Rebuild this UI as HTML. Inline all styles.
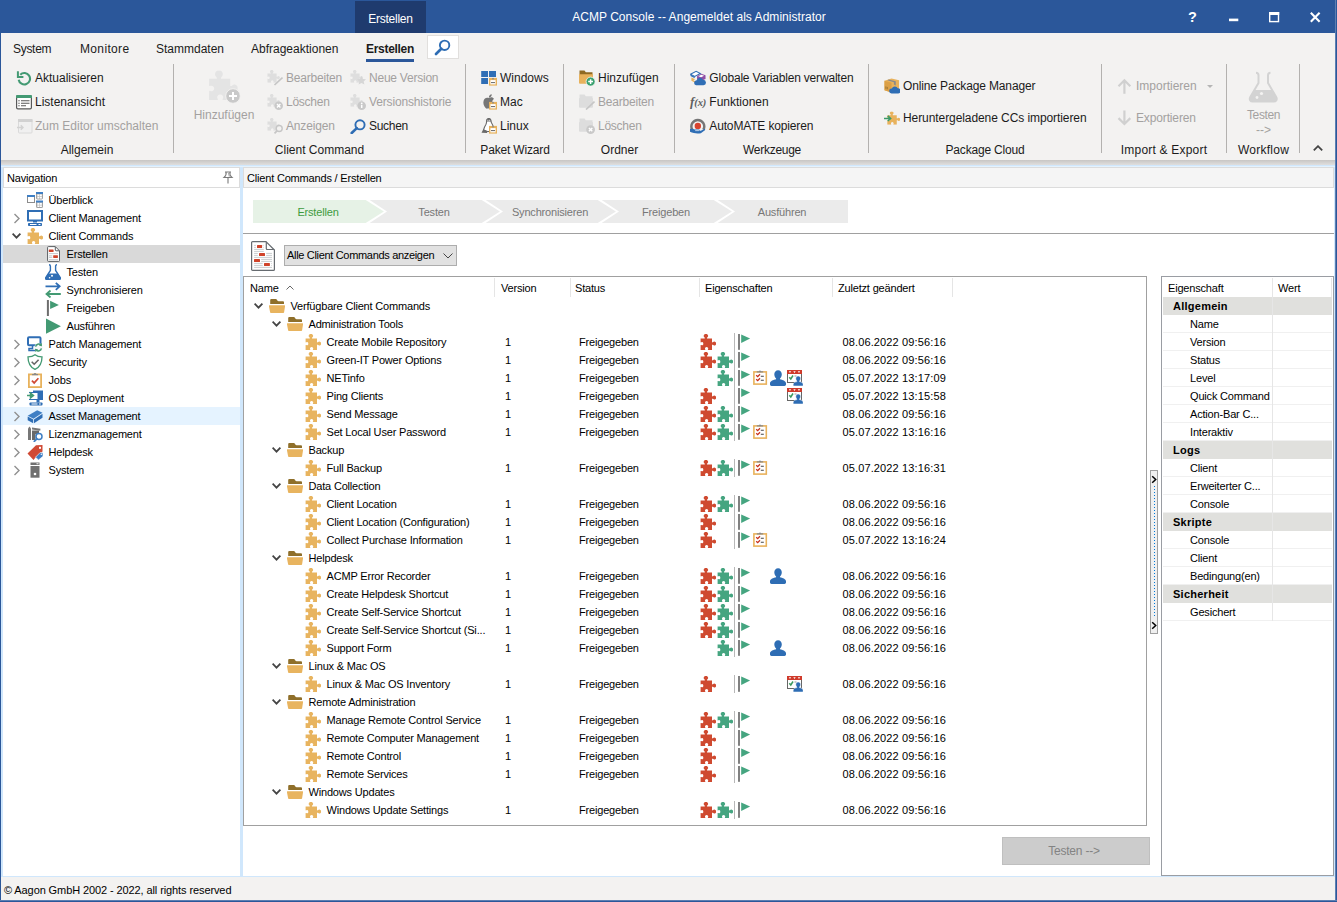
<!DOCTYPE html>
<html lang="de"><head><meta charset="utf-8"><title>ACMP Console</title>
<style>
html,body{margin:0;padding:0}
body{position:relative;width:1337px;height:902px;overflow:hidden;background:#fff;font-family:"Liberation Sans",sans-serif;font-size:12px;color:#000}
.i{position:absolute;display:block;overflow:visible}
.t{position:absolute;white-space:nowrap;line-height:14px;height:14px}
.r{font-size:12px;color:#1b1b1b}
.th{font-size:11px;letter-spacing:-0.18px;color:#000}
.b{font-weight:bold}
.d{color:#a3a1a0}
.gl{width:200px;text-align:center}
.dis{opacity:1}
#title::before{content:"";position:absolute;left:0;top:0;width:1337px;height:33px;background:#2b579a}
#ctxtab{position:absolute;left:355px;top:1px;width:71px;height:32px;background:#1f3b6e;color:#fff;font-size:12px;line-height:36px;text-align:center;letter-spacing:-0.25px}
#caption{letter-spacing:0.04px;position:absolute;left:499px;top:10px;width:400px;text-align:center;color:#fff;font-size:12px;line-height:14px}
#ribbon::before{content:"";position:absolute;left:1px;top:33px;width:1335px;height:127px;background:#f3f2f1}
#tabul{position:absolute;left:366px;top:59px;width:48px;height:3px;background:#2b579a}
#srch{position:absolute;left:427px;top:35px;width:32px;height:24px;background:#fff;border:1px solid #e1dfdd;box-sizing:border-box}
.gsep{position:absolute;top:64px;width:1px;height:89px;background:#b3b1af}
.ddarr{position:absolute;width:0;height:0;border-left:3px solid transparent;border-right:3px solid transparent;border-top:3px solid #b5b5b5}
#rshadow{position:absolute;left:1px;top:160px;width:1335px;height:5px;background:linear-gradient(#c8c6c4,#e0dfde)}
#main::before{content:"";position:absolute;left:1px;top:165px;width:1335px;height:712px;background:#d0e7fc}
#nav::before{content:"";position:absolute;left:3px;top:167px;width:237px;height:709px;background:#fff}
#navhead{position:absolute;left:3px;top:167px;width:237px;height:21px;box-sizing:border-box;border:1px solid #dcdcdc;background:#fff}
#navhead span,#chead span{position:absolute;left:3px;top:3px;font-size:11px;letter-spacing:-0.18px;line-height:14px;white-space:nowrap}
.navsel{position:absolute;left:3px;width:237px;height:18px;background:#d9d9d9}
.navhov{position:absolute;left:3px;width:237px;height:18px;background:#e5f3ff}
#content::before{content:"";position:absolute;left:243px;top:167px;width:1091px;height:709px;background:#fff}
#chead{position:absolute;left:243px;top:167px;width:1091px;height:21px;box-sizing:border-box;border:1px solid #dcdcdc;background:#f5f5f5}
.st{font-size:11px;letter-spacing:-0.18px}
#hline{position:absolute;left:243px;top:233px;width:1091px;height:1px;background:#a0a0a0}
#combo{position:absolute;left:284px;top:245px;width:173px;height:21px;box-sizing:border-box;border:1px solid #adadad;background:#e1e1e1}
#combo span{position:absolute;left:2px;top:2px;font-size:11px;letter-spacing:-0.32px;line-height:14px;white-space:nowrap}
#tree::before{content:"";position:absolute;left:243px;top:276px;width:904px;height:550px;box-sizing:border-box;border:1px solid #a0a0a0;background:#fff}
.hsep{position:absolute;top:278px;width:1px;height:19px;background:#e5e5e5}
.pline{position:absolute;left:734px;width:1px;height:18px;background:#b8b8b8}
#btn{letter-spacing:-0.2px;padding-right:4px;position:absolute;left:1002px;top:837px;width:148px;height:28px;box-sizing:border-box;border:1px solid #bfbfbf;background:#cccccc;color:#838383;font-size:12px;text-align:center;line-height:26px}
#vhandle{position:absolute;left:1150px;top:470px;width:8px;height:164px;box-sizing:border-box;border:1px solid #a0a0a0;background:#f0f0f0}
#vsplit{position:absolute;left:1154px;top:486px;width:1px;height:130px;background:repeating-linear-gradient(#0078d7 0 1px,transparent 1px 3px)}
#props::before{content:"";position:absolute;left:1161px;top:276px;width:173px;height:600px;box-sizing:border-box;border:1px solid #9a9da3;background:#fff}
.pvsep{position:absolute;left:1272px;top:278px;width:1px;height:343px;background:#e6e6e6}
.pvsep2{position:absolute;left:1331px;top:278px;width:1px;height:19px;background:#e6e6e6}
.phead{position:absolute;left:1163px;width:169px;height:18px;background:#e0e0dd}
.prow{position:absolute;left:1163px;width:169px;height:18px;box-sizing:border-box;border-bottom:1px solid #f0f0f0}
#status::before{content:"";position:absolute;left:1px;top:877px;width:1335px;height:24px;background:#f3f2f1}
#status span{position:absolute;left:4px;top:883px;font-size:11px;letter-spacing:-0.1px;line-height:14px;white-space:nowrap}
#bl{position:absolute;left:0;top:0;width:1px;height:902px;background:#2b579a}
#br{position:absolute;left:1335px;top:0;width:2px;height:902px;background:linear-gradient(90deg,#8fa6c9,#2b579a 50%)}
#bb{position:absolute;left:0;top:900px;width:1337px;height:2px;background:linear-gradient(#8fa6c9,#2b579a 50%)}
.fx{font-family:"Liberation Serif",serif;font-style:italic;font-weight:bold;color:#606060;height:18px;line-height:18px}
.fx .f1{font-size:13px}.fx .f2{font-size:10.500px;letter-spacing:-0.2px}
.dt{letter-spacing:0.13px}
.th.b{letter-spacing:0.25px}
#whelp{position:absolute;left:1188px;top:8.500px;font-size:14.500px;font-weight:bold;color:#fff;line-height:16px}
#main::after{content:"";position:absolute;left:1px;top:166px;width:1335px;height:1px;background:#e4f2fd}

</style></head>
<body>
<svg width="0" height="0" style="position:absolute"><defs>
<symbol id="w-min" viewBox="0 0 11 11"><rect x="0" y="7.600" width="9.300" height="2.600" fill="#fff"/></symbol>
<symbol id="w-max" viewBox="0 0 11 11"><rect x="0.700" y="0.700" width="8.800" height="8.900" fill="none" stroke="#fff" stroke-width="1.400"/><rect x="0" y="0" width="10.200" height="3" fill="#fff"/></symbol>
<symbol id="w-close" viewBox="0 0 11 11"><path d="M0.800 0.800L9.600 9.800M9.600 0.800L0.800 9.800" stroke="#fff" stroke-width="2.100"/></symbol>
<symbol id="mag" viewBox="0 0 20 18"><circle cx="11.600" cy="6.300" r="4.700" fill="none" stroke="#2e6db4" stroke-width="1.900"/><path d="M8.300 9.700L3 15" stroke="#2e6db4" stroke-width="2.700" stroke-linecap="round"/></symbol>
<symbol id="mag2" viewBox="0 0 16 16"><circle cx="10" cy="6.800" r="4.600" fill="none" stroke="#2e6db4" stroke-width="1.900"/><path d="M6.800 10.100L1.700 15" stroke="#2e6db4" stroke-width="2.600" stroke-linecap="round"/></symbol>
<symbol id="ch-r" viewBox="0 0 8 11"><path d="M1.500 1L6 5.500L1.500 10" fill="none" stroke="#909090" stroke-width="1.400"/></symbol>
<symbol id="ch-d" viewBox="0 0 10 7"><path d="M0.600 0.700L4.500 4.700L8.400 0.700" fill="none" stroke="#444" stroke-width="1.800"/></symbol>
<symbol id="ch-dd" viewBox="0 0 10 6"><path d="M0.5 0.5L5 5L9.5 0.5" fill="none" stroke="#444" stroke-width="1"/></symbol>
<symbol id="sortup" viewBox="0 0 8 5"><path d="M0.5 4.5L4 1L7.5 4.5" fill="none" stroke="#555" stroke-width="0.9"/></symbol>
<symbol id="collapse" viewBox="0 0 10 6"><path d="M0.800 5.300L5 1.200L9.200 5.300" fill="none" stroke="#444" stroke-width="1.800"/></symbol>
<symbol id="sp-arrow" viewBox="0 0 6 9"><path d="M1.200 1.200L4.700 4.500L1.200 7.800" fill="none" stroke="#000" stroke-width="1.500"/></symbol>
<symbol id="pz" viewBox="0 0 16 16"><path d="M0.600 4.500L4.500 4.500C4.900 4.500 4.900 4 4.600 3.600A2.100 2.100 0 1 1 7.200 3.600C6.900 4 6.900 4.500 7.300 4.500L12 4.500L12 8.100C12 8.500 12.500 8.500 12.900 8.300A1.900 1.900 0 1 1 12.900 10.800C12.500 10.600 12 10.600 12 11L12 16L8.200 16C7.800 16 7.800 15.600 8 15.300A1.600 1.600 0 1 0 5.200 15.300C5.400 15.600 5.400 16 5 16L0.600 16L0.600 11.300C0.600 10.900 1 10.900 1.300 11.100A1.500 1.500 0 1 0 1.300 8.300C1 8.500 0.600 8.500 0.600 8.100z"/></symbol>
<symbol id="pz-y" viewBox="0 0 16 16"><use href="#pz" width="16" height="16" fill="#e8b45f"/></symbol>
<symbol id="pz-r" viewBox="0 0 16 16"><use href="#pz" width="16" height="16" fill="#cf4a30"/></symbol>
<symbol id="pz-g" viewBox="0 0 16 16"><use href="#pz" width="16" height="16" fill="#45a580"/></symbol>
<symbol id="n-puzzle" viewBox="0 0 16 16"><use href="#pz" width="16" height="16" fill="#e8b45f"/></symbol>
<symbol id="folder" viewBox="0 0 16 16"><path d="M1.200 2A1 1 0 0 1 2.200 1H6.600C7.300 1 7.700 1.500 8.200 2.300C8.500 2.900 9 3.300 9.700 3.300H14A1 1 0 0 1 15 4.300V6H1.200z" fill="#8f6f2a"/><path d="M0.400 7.300H15.600A0.500 0.500 0 0 1 16.100 7.900L15.100 14.200A0.800 0.800 0 0 1 14.300 14.900H1.900A0.800 0.800 0 0 1 1.100 14.200L-0.100 7.900A0.500 0.500 0 0 1 0.400 7.300z" fill="#e8b45f"/></symbol>
<symbol id="flag" viewBox="0 0 16 16"><rect x="1.100" y="0" width="1.800" height="15.800" fill="#747474"/><path d="M4.200 0.500L13.100 4.500L4.200 9z" fill="#45a580"/></symbol>
<symbol id="clip" viewBox="0 0 16 16"><rect x="1.900" y="1.900" width="12.400" height="12.200" fill="#fff" stroke="#e9b25c" stroke-width="1.600"/><path d="M4.800 2.600V1.300h2a1.400 1.400 0 0 1 2.400 0h2v1.300z" fill="#8a8a8a"/><path d="M4.200 5.300l1.500 1.400L8 4.300M4.200 9.300l1.500 1.400L8 8.300" fill="none" stroke="#c9301c" stroke-width="1.300"/><path d="M8.800 6.300h3M8.800 10.300h3" stroke="#444" stroke-width="1.100"/></symbol>
<symbol id="user" viewBox="0 0 16 16"><path d="M8.100 0.200C10.300 0.200 11.800 1.900 11.800 4.300C11.800 6.200 11 7.700 10 8.500V9.200C12.500 9.800 16 10.900 16 13.200V14.600C16 15.400 15.300 16 14.500 16H1.500C0.700 16 0 15.400 0 14.600V13.200C0 10.900 3.500 9.800 6.100 9.200V8.500C5.100 7.700 4.300 6.200 4.300 4.300C4.300 1.900 5.900 0.200 8.100 0.200z" fill="#2e6db4"/></symbol>
<symbol id="caluser" viewBox="0 0 16 16"><rect x="0.500" y="0.500" width="14" height="12" fill="#fff" stroke="#666" stroke-width="1"/><rect x="0" y="0" width="15" height="4" fill="#cf3a2b"/><path d="M1.800 1.200h2.400l-1.200 1.800zM6.300 1.200h2.400l-1.200 1.800zM10.800 1.200h2.400l-1.200 1.800z" fill="#fff"/><path d="M2.300 7.300l1.500 1.700L6 5.500" fill="none" stroke="#3c9a5f" stroke-width="1.500"/><path d="M7.500 6h2" stroke="#999" stroke-width="1"/><path d="M11.200 6C12.700 6 13.600 7.100 13.600 8.600C13.600 9.700 13.100 10.600 12.500 11.100V11.600C14.100 12 16.200 12.700 16.200 14.200V16H6.200V14.200C6.200 12.700 8.300 12 9.900 11.600V11.100C9.300 10.600 8.800 9.700 8.800 8.600C8.800 7.100 9.700 6 11.200 6z" fill="#2e6db4" stroke="#fff" stroke-width="0.500"/></symbol>

<symbol id="n-overview" viewBox="0 0 16 16"><rect x="0.5" y="4" width="7" height="6.500" fill="#fff" stroke="#8c8c8c"/><rect x="0" y="3" width="8" height="2" fill="#3f7fc4"/><rect x="9.500" y="1" width="6" height="6" rx="0.600" fill="#c2c2c2" stroke="#a0a0a0"/><rect x="9" y="0" width="7" height="2" fill="#3f7fc4"/><path d="M10.500 2.500h1.800v1.800h-1.800zM13 2.500h1.800v1.800H13zM10.500 4.900h1.800v1.500h-1.800zM13 4.900h1.800v1.500H13z" fill="#fff"/><rect x="9.500" y="9.500" width="6" height="6" rx="0.600" fill="#c2c2c2" stroke="#a0a0a0"/><rect x="9" y="8.500" width="7" height="2" fill="#3f7fc4"/><path d="M10.500 11h1.800v1.800h-1.800zM13 11h1.800v1.800H13zM10.500 13.400h1.800v1.500h-1.800zM13 13.400h1.800v1.500H13z" fill="#fff"/></symbol>
<symbol id="n-client" viewBox="0 0 16 16"><rect x="1" y="1" width="14" height="9.500" fill="#fff" stroke="#2f6eb5" stroke-width="2"/><rect x="6" y="11" width="4" height="1.500" fill="#2f6eb5"/><rect x="1" y="13" width="14" height="3" rx="0.800" fill="#2f6eb5"/><rect x="3" y="14" width="6.500" height="1" fill="#fff"/><rect x="11.500" y="14" width="2" height="1" fill="#fff"/></symbol>
<symbol id="n-doc" viewBox="0 0 16 16"><path d="M3.400 0.600H10.300L14.500 4.800V14.600a0.800 0.800 0 0 1-0.800 0.800H3.400a0.800 0.800 0 0 1-0.800-0.800V1.400a0.800 0.800 0 0 1 0.800-0.800z" fill="#fff" stroke="#5a5e62"/><path d="M10.300 0.800V4a0.800 0.800 0 0 0 0.800 0.800H14.300" fill="none" stroke="#5a5e62"/><rect x="3.800" y="3.500" width="4.800" height="2.400" rx="0.400" fill="#d0432a"/><rect x="8.200" y="9.200" width="4.700" height="2.700" rx="0.400" fill="#d0432a"/><path d="M4 7.600h9M4 9.800h3.300M4 11.400h3.300M4 13.700h9" stroke="#b5b8bb" stroke-width="0.800"/></symbol>
<symbol id="n-flask" viewBox="0 0 16 16"><path d="M4 0.700C5 0.700 5.400 1.300 5.400 2.200V6.500L0.900 13.300C0.200 14.500 0.900 15.700 2.200 15.700H13.800C15.100 15.700 15.800 14.500 15.100 13.300L10.600 6.500V2.200C10.600 1.300 11 0.700 12 0.700" fill="none" stroke="#2f6eb5" stroke-width="1.400"/><path d="M3.200 9.500H12.800L15.100 13.300C15.800 14.500 15.100 15.700 13.800 15.700H2.200C0.900 15.700 0.200 14.500 0.900 13.300z" fill="#2f6eb5"/><circle cx="7" cy="11.700" r="1" fill="#fff"/><circle cx="4.600" cy="13.700" r="0.800" fill="#fff"/></symbol>
<symbol id="n-sync" viewBox="0 0 16 16"><path d="M0.500 4.300H14.500M10.800 0.800L14.700 4.300L10.800 7.800" fill="none" stroke="#2f6eb5" stroke-width="1.800"/><path d="M15.800 12H1.800M5.500 8.500L1.500 12L5.500 15.500" fill="none" stroke="#439a73" stroke-width="1.800"/></symbol>
<symbol id="n-flag" viewBox="0 0 16 16"><rect x="1.900" y="0" width="2" height="16" fill="#6d6d6d"/><path d="M5.100 0.700L13.900 5L5.100 9z" fill="#439a73"/></symbol>
<symbol id="n-play" viewBox="0 0 16 16"><path d="M1 0.600L15.900 8.200L1 15.800z" fill="#439a73"/></symbol>
<symbol id="n-patch" viewBox="0 0 16 16"><rect x="1" y="1.300" width="12.500" height="8" rx="1" fill="#fff" stroke="#2f6eb5" stroke-width="2"/><path d="M5.500 10v2.500H2v2h6" fill="none" stroke="#2f6eb5" stroke-width="1.500"/><circle cx="11.500" cy="11.500" r="4.300" fill="#f8f8f8"/><path d="M8.600 10.600a3.100 3.100 0 0 1 5.300-1.500M14.400 12.400a3.100 3.100 0 0 1-5.300 1.500" fill="none" stroke="#439a73" stroke-width="1.500"/><path d="M14.800 7l0.200 3.200-3.100-0.500zM8.200 16l-0.200-3.200 3.100 0.500z" fill="#439a73"/></symbol>
<symbol id="n-shield" viewBox="0 0 16 16"><path d="M8 0.800C10 2.400 12.500 2.900 15 2.900C15 9 13 13 8 15.400C3 13 1 9 1 2.900C3.500 2.900 6 2.400 8 0.800z" fill="#fff" stroke="#439a73" stroke-width="1.300"/><path d="M4.700 7.700L7.200 10.200L11.600 5.700" fill="none" stroke="#666" stroke-width="1.600"/></symbol>
<symbol id="n-jobs" viewBox="0 0 16 16"><rect x="1.900" y="2.400" width="12.200" height="12.700" fill="#fff" stroke="#e8b25c" stroke-width="1.800"/><path d="M5 3.200V2h1.600a1.500 1.500 0 0 1 2.800 0H11v1.200z" fill="#8a8a8a"/><path d="M4.900 8.600L7.200 10.900L11.400 6.300" fill="none" stroke="#d04a35" stroke-width="1.700"/></symbol>
<symbol id="n-osd" viewBox="0 0 16 16"><rect x="6" y="0.500" width="10" height="9.500" fill="#2f6eb5"/><rect x="9.500" y="10" width="3" height="2.500" fill="#2f6eb5"/><rect x="2.500" y="12.500" width="13" height="3" rx="0.800" fill="#2f6eb5"/><rect x="4.500" y="13.500" width="6" height="1" fill="#fff"/><rect x="12" y="13.500" width="1.800" height="1" fill="#fff"/><path d="M2 2.500h9v7H2" fill="#fff" stroke="#2f6eb5" stroke-width="1"/><path d="M0 5.500h5M3.500 3L6.500 5.500L3.500 8z" fill="#439a73" stroke="#439a73" stroke-width="1.500"/></symbol>
<symbol id="n-asset" viewBox="0 0 16 16"><path d="M0.700 7.800L10.200 2.300L15.500 4.800L6.500 10.700z" fill="#3f7fc4"/><path d="M0.700 8.600L6.200 11.400V15.200L0.700 12.300z" fill="#2f6eb5"/><path d="M7 11.400L15.500 5.700V9.700L7 15.200z" fill="#2f6eb5"/></symbol>
<symbol id="n-lic" viewBox="0 0 16 16"><path d="M1 2.500l1.500-2 1.500 2V14H1z" fill="#777"/><path d="M5 1.500l8.500 1.200-0.300 2L5 3.500z" fill="#777"/><path d="M5 4.500h7v3.500h-3.500v6H5z" fill="#6a6a6a"/><circle cx="12" cy="10.500" r="3" fill="#fff" stroke="#3f7fc4" stroke-width="1.500"/><path d="M9.800 12.800L7.300 15.300" stroke="#3f7fc4" stroke-width="1.800" stroke-linecap="round"/></symbol>
<symbol id="n-help" viewBox="0 0 16 16"><path d="M0.500 9.500L9 1.200L15.500 1V7.500L13 10L8.500 13.500L6.500 16z" fill="#d04a35"/><rect x="12" y="2.800" width="2" height="2" fill="#fff"/><path d="M8.500 13.200L13.200 8.500L16 8.800V12.300L11.500 16z" fill="#3f7fc4" stroke="#fff" stroke-width="0.600"/><circle cx="14.300" cy="10.300" r="0.700" fill="#fff"/></symbol>
<symbol id="n-sys" viewBox="0 0 16 16"><rect x="3.500" y="0.500" width="9" height="2.500" fill="#707070"/><rect x="9.500" y="1.300" width="2" height="0.900" fill="#fff"/><rect x="3.500" y="4" width="9" height="11.700" fill="#707070"/><circle cx="8" cy="12" r="1.300" fill="#fff"/></symbol>
<symbol id="pin" viewBox="0 0 12 14"><path d="M3 1h6M4 1.200C4.500 3 4.300 4.500 2 6.500H10C7.700 4.500 7.500 3 8 1.200M6 6.500V12.500" fill="none" stroke="#7a7a7a" stroke-width="1.100"/><path d="M6.500 2l1 3.500" stroke="#aaa" stroke-width="1.200"/></symbol>
<symbol id="bigdoc" viewBox="0 0 24 30"><path d="M1.600 0.600H15L23.400 9V28.400a1 1 0 0 1-1 1H1.600a1 1 0 0 1-1-1V1.600a1 1 0 0 1 1-1z" fill="#fff" stroke="#666b70" stroke-width="1.200" stroke-linejoin="round"/><path d="M15.300 0.800V7.500a1 1 0 0 0 1 1H23.200" fill="none" stroke="#666b70" stroke-width="1.200"/><path d="M3.100 4.400h1.800M3.100 6.400h1.800M12.200 4.400h0.600M12.200 6.400h0.600M3.100 8.400h9.700M3.100 10.400h9.700M3.100 12.400h3.700M3.100 14.400h3.700M15.200 12.400h5.800M15.200 14.400h5.800M3.100 16.400h17.900M10.200 18.400h10.800M10.200 20.400h10.800M3.100 22.400h8.600M3.100 24.400h8.600M20.300 22.400h0.700M20.300 24.400h0.700M3.100 26.400h17.900" stroke="#c3c6c9" stroke-width="0.900"/><rect x="6" y="4.100" width="5.100" height="2.800" rx="0.500" fill="#d0432a"/><rect x="8" y="12.100" width="6" height="2.800" rx="0.500" fill="#d0432a"/><rect x="3" y="18.100" width="6" height="2.800" rx="0.500" fill="#d0432a"/><rect x="13" y="22.100" width="5.900" height="2.800" rx="0.500" fill="#d0432a"/></symbol>

<symbol id="refresh" viewBox="0 0 16 16"><path d="M2.700 9.700A5.700 5.700 0 1 0 4.300 4.700" fill="none" stroke="#439a73" stroke-width="2.100"/><path d="M1.900 1.300V6.900H7.400" fill="none" stroke="#439a73" stroke-width="2"/></symbol>
<symbol id="listview" viewBox="0 0 16 16"><rect x="0.600" y="1.600" width="14.800" height="13.300" rx="1.300" fill="#fff" stroke="#585858" stroke-width="1.200"/><path d="M0 4V2.300A1.300 1.300 0 0 1 1.300 1H14.700A1.300 1.300 0 0 1 16 2.300V4z" fill="#439a73"/><path d="M2.300 6.700h1.400M2.300 9.200h1.400M2.300 11.700h1.400M5 6.700h8.500M5 9.200h8.500M5 11.700h5" stroke="#585858" stroke-width="1.100"/></symbol>
<symbol id="editor" viewBox="0 0 16 16"><rect x="1.500" y="1.500" width="13.500" height="13.500" rx="0.800" fill="#f0f0f0" stroke="#dadada"/><rect x="1" y="1" width="14.500" height="3" fill="#d2d2d2"/><path d="M0 9.500h5.500M3.800 7.300l2.200 2.200-2.200 2.200" fill="none" stroke="#d2d2d2" stroke-width="1.400"/></symbol>
<symbol id="pz-big" viewBox="0 0 34 38"><g transform="translate(1 2.500) scale(1.850)"><use href="#pz" width="16" height="16" fill="#e4e4e4"/></g><circle cx="26" cy="28" r="7.300" fill="#c9c9c9" stroke="#f3f2f1" stroke-width="1"/><path d="M22 28h8M26 24v8" stroke="#fff" stroke-width="2"/></symbol>
<symbol id="pzs" viewBox="0 0 16 16"><g transform="translate(0 0) scale(0.800)"><use href="#pz" width="16" height="16" fill="#dedede"/></g></symbol>
<symbol id="pz-edit" viewBox="0 0 16 16"><use href="#pzs" width="16" height="16"/><path d="M7.500 15L15.500 7.500" stroke="#c6c6c6" stroke-width="1.700"/></symbol>
<symbol id="pz-del" viewBox="0 0 16 16"><use href="#pzs" width="16" height="16"/><circle cx="11.700" cy="11.700" r="4.300" fill="#c9c9c9"/><path d="M10 10l3.400 3.400M13.400 10L10 13.400" stroke="#fff" stroke-width="1.400"/></symbol>
<symbol id="pz-view" viewBox="0 0 16 16"><use href="#pzs" width="16" height="16"/><circle cx="12.200" cy="10.500" r="3" fill="#f3f2f1" stroke="#c6c6c6" stroke-width="1.400"/><path d="M10 12.800L7.500 15.300" stroke="#c6c6c6" stroke-width="1.800"/></symbol>
<symbol id="pz-new" viewBox="0 0 16 16"><use href="#pzs" width="16" height="16"/><path d="M11.500 6l1.400 3 3.100 0.300-2.300 2.100 0.700 3.100-2.900-1.600-2.900 1.600 0.700-3.100L7 9.300l3.100-0.300z" fill="#d6d6d6"/></symbol>
<symbol id="pz-hist" viewBox="0 0 16 16"><use href="#pzs" width="16" height="16"/><circle cx="11.700" cy="11.700" r="4.300" fill="#c9c9c9"/><path d="M11.700 10.800v3.200" stroke="#fff" stroke-width="1.500"/><circle cx="11.700" cy="9.300" r="0.900" fill="#fff"/></symbol>
<symbol id="pkg" viewBox="0 0 8 8"><rect x="0.700" y="0.700" width="6.600" height="6.600" fill="#fff" stroke="#e8b25c" stroke-width="1.400"/><rect x="0" y="0" width="8" height="2.300" fill="#e8b25c"/><rect x="3.200" y="0" width="1.600" height="1.600" fill="#8a8a8a"/><path d="M2 4.800h4" stroke="#666" stroke-width="1"/></symbol>
<symbol id="win" viewBox="0 0 16 16"><path d="M0.200 1h6.800v6H0.200zM8 1h7v6H8zM0.200 8h6.800v6H0.200z" fill="#2f6eb5"/><path d="M8 8h1v6H8z" fill="#2f6eb5"/><use href="#pkg" x="8" y="7.800" width="8" height="8"/></symbol>
<symbol id="mac" viewBox="0 0 16 16"><path d="M8.300 3.800C9.300 3.200 10.500 3 11.500 3.500C12.300 3.900 12.800 4.500 13 5C11.800 5.700 11.300 6.700 11.400 8C11.500 9.300 12.200 10.200 13.300 10.700C12.800 12.200 11.900 13.500 11 14.300C10.300 14.900 9.500 14.600 8.700 14.300C7.900 14 7.300 14.300 6.600 14.600C5.800 14.900 5.200 14.600 4.600 14C3 12.300 1.800 9.300 2.600 6.700C3.200 4.800 4.700 3.600 6.300 3.700C7 3.700 7.700 4.100 8.300 3.800z" fill="#767676"/><path d="M10.700 0.300C10.800 1.300 10.400 2.200 9.800 2.800C9.300 3.300 8.600 3.600 7.900 3.500C7.800 2.600 8.200 1.800 8.700 1.200C9.200 0.700 10 0.300 10.700 0.300z" fill="#767676"/><use href="#pkg" x="8" y="7.800" width="8" height="8"/></symbol>
<symbol id="linux" viewBox="0 0 16 16"><path d="M7.800 0.500C9.200 0.500 10 1.500 10 2.900C10 4.300 10.500 5 11.300 6.300C12 7.500 12.500 9 12.500 10.500V13.500H5.500L2.500 12C3 10 4 8 5 6.300C5.600 5.200 5.600 4.300 5.600 2.900C5.600 1.500 6.400 0.500 7.800 0.500z" fill="#fff" stroke="#6a6a6a" stroke-width="1.100"/><path d="M5.400 3.600V2.700C5.400 1.300 6.400 0.300 7.800 0.300S10.200 1.300 10.200 2.700V3.600z" fill="#6a6a6a"/><circle cx="6.900" cy="2.300" r="0.550" fill="#fff"/><circle cx="8.700" cy="2.300" r="0.550" fill="#fff"/><path d="M0.500 14.700L2.300 11.300L6.500 13L6 14.900z" fill="#6a6a6a"/><use href="#pkg" x="8" y="7.800" width="8" height="8"/></symbol>
<symbol id="fo" viewBox="0 0 16 16"><path d="M0.500 0.500h5l1.300 1.800H13.500v4H0.500z"/><path d="M0 4.300h14v8.500a1 1 0 0 1-1 1H1a1 1 0 0 1-1-1z"/></symbol>
<symbol id="fo-add" viewBox="0 0 16 16"><path d="M0.500 0.500h5l1.300 1.800H13.500v4H0.500z" fill="#8f6a23"/><path d="M0 4.300h14v8.500a1 1 0 0 1-1 1H1a1 1 0 0 1-1-1z" fill="#e8b25c"/><circle cx="11.600" cy="11.600" r="4.500" fill="#3aa16f" stroke="#f3f2f1" stroke-width="0.800"/><path d="M9.200 11.600h4.800M11.600 9.200v4.800" stroke="#fff" stroke-width="1.500"/></symbol>
<symbol id="fo-edit" viewBox="0 0 16 16"><use href="#fo" width="16" height="16" fill="#dddddd"/><path d="M7 15.500L15.500 7.500" stroke="#c6c6c6" stroke-width="1.700"/></symbol>
<symbol id="fo-del" viewBox="0 0 16 16"><use href="#fo" width="16" height="16" fill="#dddddd"/><circle cx="11.600" cy="11.600" r="4.400" fill="#c9c9c9"/><path d="M9.900 9.900l3.400 3.400M13.300 9.900L9.900 13.300" stroke="#fff" stroke-width="1.400"/></symbol>
<symbol id="globvar" viewBox="0 0 17 16"><path d="M0.500 4L6.500 0.800L11 3.200L5 6.400z" fill="#fff" stroke="#2f6eb5" stroke-width="1.100"/><path d="M0.500 4.200L5 6.600V8.200L0.500 5.800z" fill="#2f6eb5"/><path d="M7.500 6L12 3.500L16.500 5V9L12 11L7.500 9z" fill="#8f4fa6"/><path d="M8.800 6.100L12 4.500L15 5.500L11.800 7.100z" fill="#fff"/><path d="M1.500 7.500L5.500 9.300L3.500 10.300L5.500 11.500V13L1.500 11z" fill="#e8b25c"/><path d="M6.500 15.800a2.800 2.800 0 0 1 0.500-5.500a3.600 3.600 0 0 1 6.800-0.300a2.900 2.900 0 0 1 0.500 5.800z" fill="#2f6eb5"/></symbol>
<symbol id="automate" viewBox="0 0 17 16"><path d="M2.400 11.800A6.800 6.800 0 1 1 14.200 11.800" fill="none" stroke="#767676" stroke-width="2.600"/><circle cx="8.300" cy="7.900" r="3.400" fill="#d8432e"/><path d="M0 11.300C1.800 10.700 3.500 11 5 11.700H9.500C10.500 11.700 10.600 12.800 9.600 12.900H7L11.500 13L15 11.200C16 10.800 16.600 11.800 15.800 12.400L11.500 15.600C8 16.200 4 16 0 14.200z" fill="#2f6eb5"/><path d="M5.500 12.900h4" stroke="#fff" stroke-width="0.700"/></symbol>
<symbol id="opm" viewBox="0 0 17 17"><path d="M0.500 3L8 0.500L16 2.500V12L8 15.500L0.500 13z" fill="#e8b25c"/><path d="M0.500 3L8 5V15.500L0.500 13z" fill="#dca046"/><path d="M5 1.500L12.500 3.500V8L10.500 7V4.500L3.500 2.300z" fill="#8a8a8a"/><path d="M2 9v2.500M3.500 9.500v2.500" stroke="#8a6a30" stroke-width="0.800"/><path d="M8 16.500a2.700 2.700 0 0 1 0.300-5.400a3.500 3.500 0 0 1 6.400-0.200a2.800 2.800 0 0 1 0.300 5.600z" fill="#2f6eb5"/></symbol>
<symbol id="ccimp" viewBox="0 0 17 16"><g transform="translate(3 1) scale(0.880)"><use href="#pz" width="16" height="16" fill="#e8b25c"/></g><path d="M0 8.500h6M4 5.800L7 8.500L4 11.200" fill="none" stroke="#3a9a68" stroke-width="1.700"/></symbol>
<symbol id="arr-up" viewBox="0 0 16 16"><path d="M7.400 15.700V2.500M1.500 8.200L7.400 2.300L13.300 8.200" fill="none" stroke="#d0d0d0" stroke-width="2.200"/></symbol>
<symbol id="arr-dn" viewBox="0 0 16 16"><path d="M7.400 0.600V13.800M1.500 8.100L7.400 14L13.300 8.100" fill="none" stroke="#d0d0d0" stroke-width="2.200"/></symbol>
<symbol id="flask-big" viewBox="0 0 32 36"><path d="M9 3.700C10.800 3.700 11.500 4.700 11.500 6.200V14L3.300 28C2 30.300 3.300 32.600 5.800 32.600H26.700C29.200 32.600 30.500 30.300 29.200 28L21 14V6.200C21 4.700 21.700 3.700 23.500 3.700" fill="none" stroke="#d3d3d3" stroke-width="2"/><path d="M7.500 21H25L29.200 28C30.500 30.300 29.200 32.600 26.700 32.600H5.800C3.300 32.600 2 30.300 3.300 28z" fill="#d3d3d3"/><circle cx="14.500" cy="24.500" r="1.600" fill="#f3f2f1"/><circle cx="10" cy="28.500" r="1.400" fill="#f3f2f1"/></symbol>
</defs></svg>
<div id="title"><div id="ctxtab">Erstellen</div><div id="caption">ACMP Console -- Angemeldet als Administrator</div><div id="whelp">?</div><svg class="i " style="left:1229px;top:11px" width="11" height="11"><use href="#w-min"/></svg><svg class="i " style="left:1269px;top:12px" width="11" height="11"><use href="#w-max"/></svg><svg class="i " style="left:1310px;top:12px" width="11" height="11"><use href="#w-close"/></svg></div>
<div id="ribbon"><div class="t r" style="left:13px;top:42px;letter-spacing:-0.3px;">System</div><div class="t r" style="left:80px;top:42px;letter-spacing:0.35px;">Monitore</div><div class="t r" style="left:156px;top:42px;">Stammdaten</div><div class="t r" style="left:251px;top:42px;">Abfrageaktionen</div><div class="t r b" style="left:366px;top:42px;letter-spacing:-0.3px">Erstellen</div><div id="tabul"></div><div id="srch"></div><svg class="i " style="left:433px;top:39px" width="20" height="18"><use href="#mag"/></svg><div class="gsep" style="left:173px"></div><div class="gsep" style="left:465px"></div><div class="gsep" style="left:563px"></div><div class="gsep" style="left:674px"></div><div class="gsep" style="left:868px"></div><div class="gsep" style="left:1101px"></div><div class="gsep" style="left:1226px"></div><div class="gsep" style="left:1299px"></div><div class="t r gl" style="left:-13px;top:143px;letter-spacing:0px">Allgemein</div><div class="t r gl" style="left:219.5px;top:143px;letter-spacing:0px">Client Command</div><div class="t r gl" style="left:415px;top:143px;letter-spacing:-0.17px">Paket Wizard</div><div class="t r gl" style="left:519.5px;top:143px;letter-spacing:0px">Ordner</div><div class="t r gl" style="left:672px;top:143px;letter-spacing:-0.28px">Werkzeuge</div><div class="t r gl" style="left:885px;top:143px;letter-spacing:-0.19px">Package Cloud</div><div class="t r gl" style="left:1064px;top:143px;letter-spacing:0.2px">Import &amp; Export</div><div class="t r gl" style="left:1163.5px;top:143px;letter-spacing:0.25px">Workflow</div><svg class="i " style="left:16px;top:70px" width="16" height="16"><use href="#refresh"/></svg><div class="t r" style="left:35px;top:71px;">Aktualisieren</div><svg class="i " style="left:16px;top:94px" width="16" height="16"><use href="#listview"/></svg><div class="t r" style="left:35px;top:95px;">Listenansicht</div><svg class="i dis" style="left:17px;top:118px" width="16" height="16"><use href="#editor"/></svg><div class="t r d" style="left:35px;top:119px;">Zum Editor umschalten</div><svg class="i " style="left:207px;top:68px" width="34" height="38"><use href="#pz-big"/></svg><div class="t r d gl" style="left:124px;top:108px">Hinzufügen</div><svg class="i dis" style="left:267px;top:70px" width="16" height="16"><use href="#pz-edit"/></svg><div class="t r d" style="left:286px;top:71px;letter-spacing:-0.2px;">Bearbeiten</div><svg class="i dis" style="left:267px;top:94px" width="16" height="16"><use href="#pz-del"/></svg><div class="t r d" style="left:286px;top:95px;letter-spacing:-0.25px;">Löschen</div><svg class="i dis" style="left:267px;top:118px" width="16" height="16"><use href="#pz-view"/></svg><div class="t r d" style="left:286px;top:119px;letter-spacing:-0.17px;">Anzeigen</div><svg class="i dis" style="left:350px;top:70px" width="16" height="16"><use href="#pz-new"/></svg><div class="t r d" style="left:369px;top:71px;letter-spacing:-0.23px;">Neue Version</div><svg class="i dis" style="left:350px;top:94px" width="16" height="16"><use href="#pz-hist"/></svg><div class="t r d" style="left:369px;top:95px;letter-spacing:-0.15px;">Versionshistorie</div><svg class="i " style="left:350px;top:118px" width="16" height="16"><use href="#mag2"/></svg><div class="t r" style="left:369px;top:119px;letter-spacing:-0.3px;">Suchen</div><svg class="i " style="left:481px;top:70px" width="16" height="16"><use href="#win"/></svg><div class="t r" style="left:500px;top:71px;">Windows</div><svg class="i " style="left:481px;top:94px" width="16" height="16"><use href="#mac"/></svg><div class="t r" style="left:500px;top:95px;">Mac</div><svg class="i " style="left:481px;top:118px" width="16" height="16"><use href="#linux"/></svg><div class="t r" style="left:500px;top:119px;">Linux</div><svg class="i " style="left:579px;top:70px" width="16" height="16"><use href="#fo-add"/></svg><div class="t r" style="left:598px;top:71px;">Hinzufügen</div><svg class="i dis" style="left:579px;top:94px" width="16" height="16"><use href="#fo-edit"/></svg><div class="t r d" style="left:598px;top:95px;letter-spacing:-0.2px;">Bearbeiten</div><svg class="i dis" style="left:579px;top:118px" width="16" height="16"><use href="#fo-del"/></svg><div class="t r d" style="left:598px;top:119px;letter-spacing:-0.25px;">Löschen</div><svg class="i " style="left:690px;top:70px" width="16" height="16"><use href="#globvar"/></svg><div class="t r" style="left:709.3px;top:71px;letter-spacing:-0.185px;">Globale Variablen verwalten</div><div class="t fx" style="left:690px;top:93px"><span class="f1">f</span><span class="f2">(x)</span></div><div class="t r" style="left:709.3px;top:95px;">Funktionen</div><svg class="i " style="left:690px;top:118px" width="16" height="16"><use href="#automate"/></svg><div class="t r" style="left:709.3px;top:119px;letter-spacing:-0.15px;">AutoMATE kopieren</div><svg class="i " style="left:884px;top:78px" width="16" height="16"><use href="#opm"/></svg><div class="t r" style="left:903px;top:79px;letter-spacing:-0.14px;">Online Package Manager</div><svg class="i " style="left:884px;top:110px" width="16" height="16"><use href="#ccimp"/></svg><div class="t r" style="left:903px;top:111px;letter-spacing:-0.08px;">Heruntergeladene CCs importieren</div><svg class="i dis" style="left:1117px;top:78px" width="16" height="16"><use href="#arr-up"/></svg><div class="t r d" style="left:1136px;top:79px;">Importieren</div><svg class="i dis" style="left:1117px;top:110px" width="16" height="16"><use href="#arr-dn"/></svg><div class="t r d" style="left:1136px;top:111px;letter-spacing:-0.14px;">Exportieren</div><div class="ddarr" style="left:1207px;top:85px"></div><svg class="i " style="left:1247px;top:69px" width="32" height="36"><use href="#flask-big"/></svg><div class="t r d gl" style="left:1163.5px;top:108px;letter-spacing:-0.4px">Testen</div><div class="t r d gl" style="left:1163.5px;top:123px">--&gt;</div><svg class="i " style="left:1313px;top:145px" width="10" height="6"><use href="#collapse"/></svg></div>
<div id="rshadow"></div>
<div id="main"><div id="nav"><div id="navhead"><span>Navigation</span></div><svg class="i " style="left:222px;top:171px" width="12" height="14"><use href="#pin"/></svg><svg class="i " style="left:27px;top:192px" width="16" height="16"><use href="#n-overview"/></svg><div class="t th" style="left:48.5px;top:193px;">Überblick</div><svg class="i " style="left:13px;top:213px" width="8" height="11"><use href="#ch-r"/></svg><svg class="i " style="left:27px;top:210px" width="16" height="16"><use href="#n-client"/></svg><div class="t th" style="left:48.5px;top:211px;">Client Management</div><svg class="i " style="left:12px;top:233px" width="10" height="7"><use href="#ch-d"/></svg><svg class="i " style="left:27px;top:228px" width="16" height="16"><use href="#n-puzzle"/></svg><div class="t th" style="left:48.5px;top:229px;">Client Commands</div><div class="navsel" style="top:245px"></div><svg class="i " style="left:45px;top:246px" width="16" height="16"><use href="#n-doc"/></svg><div class="t th" style="left:66.5px;top:247px;">Erstellen</div><svg class="i " style="left:45px;top:264px" width="16" height="16"><use href="#n-flask"/></svg><div class="t th" style="left:66.5px;top:265px;">Testen</div><svg class="i " style="left:45px;top:282px" width="16" height="16"><use href="#n-sync"/></svg><div class="t th" style="left:66.5px;top:283px;">Synchronisieren</div><svg class="i " style="left:45px;top:300px" width="16" height="16"><use href="#n-flag"/></svg><div class="t th" style="left:66.5px;top:301px;">Freigeben</div><svg class="i " style="left:45px;top:318px" width="16" height="16"><use href="#n-play"/></svg><div class="t th" style="left:66.5px;top:319px;">Ausführen</div><svg class="i " style="left:13px;top:339px" width="8" height="11"><use href="#ch-r"/></svg><svg class="i " style="left:27px;top:336px" width="16" height="16"><use href="#n-patch"/></svg><div class="t th" style="left:48.5px;top:337px;">Patch Management</div><svg class="i " style="left:13px;top:357px" width="8" height="11"><use href="#ch-r"/></svg><svg class="i " style="left:27px;top:354px" width="16" height="16"><use href="#n-shield"/></svg><div class="t th" style="left:48.5px;top:355px;">Security</div><svg class="i " style="left:13px;top:375px" width="8" height="11"><use href="#ch-r"/></svg><svg class="i " style="left:27px;top:372px" width="16" height="16"><use href="#n-jobs"/></svg><div class="t th" style="left:48.5px;top:373px;">Jobs</div><svg class="i " style="left:13px;top:393px" width="8" height="11"><use href="#ch-r"/></svg><svg class="i " style="left:27px;top:390px" width="16" height="16"><use href="#n-osd"/></svg><div class="t th" style="left:48.5px;top:391px;">OS Deployment</div><div class="navhov" style="top:407px"></div><svg class="i " style="left:13px;top:411px" width="8" height="11"><use href="#ch-r"/></svg><svg class="i " style="left:27px;top:408px" width="16" height="16"><use href="#n-asset"/></svg><div class="t th" style="left:48.5px;top:409px;">Asset Management</div><svg class="i " style="left:13px;top:429px" width="8" height="11"><use href="#ch-r"/></svg><svg class="i " style="left:27px;top:426px" width="16" height="16"><use href="#n-lic"/></svg><div class="t th" style="left:48.5px;top:427px;">Lizenzmanagement</div><svg class="i " style="left:13px;top:447px" width="8" height="11"><use href="#ch-r"/></svg><svg class="i " style="left:27px;top:444px" width="16" height="16"><use href="#n-help"/></svg><div class="t th" style="left:48.5px;top:445px;">Helpdesk</div><svg class="i " style="left:13px;top:465px" width="8" height="11"><use href="#ch-r"/></svg><svg class="i " style="left:27px;top:462px" width="16" height="16"><use href="#n-sys"/></svg><div class="t th" style="left:48.5px;top:463px;">System</div></div>
<div id="content"><div id="chead"><span>Client Commands / Erstellen</span></div><svg class="i" style="left:253px;top:200px" width="600" height="23"><polygon fill="#E6F2E6" points="0,0 112.7,0 130.9,11.5 112.7,23 0,23"/><polygon fill="#EBEBEB" points="116.7,0 228.7,0 246.9,11.5 228.7,23 116.7,23 134,11.5"/><polygon fill="#EBEBEB" points="232.7,0 344.7,0 362.9,11.5 344.7,23 232.7,23 250,11.5"/><polygon fill="#EBEBEB" points="348.7,0 460.7,0 478.9,11.5 460.7,23 348.7,23 366,11.5"/><polygon fill="#EBEBEB" points="464.7,0 595,0 595,23 464.7,23 482,11.5"/></svg><div class="t st gl" style="left:218px;top:205px;color:#3E9B3E">Erstellen</div><div class="t st gl" style="left:334px;top:205px;color:#777777">Testen</div><div class="t st gl" style="left:450px;top:205px;color:#777777">Synchronisieren</div><div class="t st gl" style="left:566px;top:205px;color:#777777">Freigeben</div><div class="t st gl" style="left:682px;top:205px;color:#777777">Ausführen</div><div id="hline"></div><svg class="i " style="left:251px;top:241px" width="24" height="30"><use href="#bigdoc"/></svg><div id="combo"><span>Alle Client Commands anzeigen</span></div><svg class="i " style="left:443px;top:253px" width="10" height="6"><use href="#ch-dd"/></svg><div id="tree"><div class="t th" style="left:250px;top:281px;">Name</div><div class="t th" style="left:501px;top:281px;">Version</div><div class="t th" style="left:575px;top:281px;">Status</div><div class="t th" style="left:705px;top:281px;">Eigenschaften</div><div class="t th" style="left:838px;top:281px;">Zuletzt geändert</div><svg class="i " style="left:286px;top:285px" width="8" height="5"><use href="#sortup"/></svg><div class="hsep" style="left:494px"></div><div class="hsep" style="left:570px"></div><div class="hsep" style="left:699px"></div><div class="hsep" style="left:832px"></div><div class="hsep" style="left:952px"></div><svg class="i " style="left:254px;top:303px" width="10" height="7"><use href="#ch-d"/></svg><svg class="i " style="left:269px;top:298px" width="16" height="16"><use href="#folder"/></svg><div class="t th" style="left:290.5px;top:299px;">Verfügbare Client Commands</div><svg class="i " style="left:272px;top:321px" width="10" height="7"><use href="#ch-d"/></svg><svg class="i " style="left:287px;top:316px" width="16" height="16"><use href="#folder"/></svg><div class="t th" style="left:308.5px;top:317px;">Administration Tools</div><svg class="i " style="left:305px;top:334px" width="16" height="16"><use href="#pz-y"/></svg><div class="t th" style="left:326.5px;top:335px;">Create Mobile Repository</div><div class="t th" style="left:505px;top:335px;">1</div><div class="t th" style="left:579px;top:335px;">Freigegeben</div><div class="t th dt" style="left:842.5px;top:335px;">08.06.2022 09:56:16</div><div class="pline" style="top:333px"></div><svg class="i " style="left:700px;top:334px" width="16" height="16"><use href="#pz-r"/></svg><svg class="i " style="left:737px;top:334px" width="16" height="16"><use href="#flag"/></svg><svg class="i " style="left:305px;top:352px" width="16" height="16"><use href="#pz-y"/></svg><div class="t th" style="left:326.5px;top:353px;">Green-IT Power Options</div><div class="t th" style="left:505px;top:353px;">1</div><div class="t th" style="left:579px;top:353px;">Freigegeben</div><div class="t th dt" style="left:842.5px;top:353px;">08.06.2022 09:56:16</div><div class="pline" style="top:351px"></div><svg class="i " style="left:700px;top:352px" width="16" height="16"><use href="#pz-r"/></svg><svg class="i " style="left:717px;top:352px" width="16" height="16"><use href="#pz-g"/></svg><svg class="i " style="left:737px;top:352px" width="16" height="16"><use href="#flag"/></svg><svg class="i " style="left:305px;top:370px" width="16" height="16"><use href="#pz-y"/></svg><div class="t th" style="left:326.5px;top:371px;">NETinfo</div><div class="t th" style="left:505px;top:371px;">1</div><div class="t th" style="left:579px;top:371px;">Freigegeben</div><div class="t th dt" style="left:842.5px;top:371px;">05.07.2022 13:17:09</div><div class="pline" style="top:369px"></div><svg class="i " style="left:717px;top:370px" width="16" height="16"><use href="#pz-g"/></svg><svg class="i " style="left:737px;top:370px" width="16" height="16"><use href="#flag"/></svg><svg class="i " style="left:752px;top:370px" width="16" height="16"><use href="#clip"/></svg><svg class="i " style="left:770px;top:370px" width="16" height="16"><use href="#user"/></svg><svg class="i " style="left:787px;top:370px" width="16" height="16"><use href="#caluser"/></svg><svg class="i " style="left:305px;top:388px" width="16" height="16"><use href="#pz-y"/></svg><div class="t th" style="left:326.5px;top:389px;">Ping Clients</div><div class="t th" style="left:505px;top:389px;">1</div><div class="t th" style="left:579px;top:389px;">Freigegeben</div><div class="t th dt" style="left:842.5px;top:389px;">05.07.2022 13:15:58</div><div class="pline" style="top:387px"></div><svg class="i " style="left:700px;top:388px" width="16" height="16"><use href="#pz-r"/></svg><svg class="i " style="left:737px;top:388px" width="16" height="16"><use href="#flag"/></svg><svg class="i " style="left:787px;top:388px" width="16" height="16"><use href="#caluser"/></svg><svg class="i " style="left:305px;top:406px" width="16" height="16"><use href="#pz-y"/></svg><div class="t th" style="left:326.5px;top:407px;">Send Message</div><div class="t th" style="left:505px;top:407px;">1</div><div class="t th" style="left:579px;top:407px;">Freigegeben</div><div class="t th dt" style="left:842.5px;top:407px;">08.06.2022 09:56:16</div><div class="pline" style="top:405px"></div><svg class="i " style="left:700px;top:406px" width="16" height="16"><use href="#pz-r"/></svg><svg class="i " style="left:717px;top:406px" width="16" height="16"><use href="#pz-g"/></svg><svg class="i " style="left:737px;top:406px" width="16" height="16"><use href="#flag"/></svg><svg class="i " style="left:305px;top:424px" width="16" height="16"><use href="#pz-y"/></svg><div class="t th" style="left:326.5px;top:425px;">Set Local User Password</div><div class="t th" style="left:505px;top:425px;">1</div><div class="t th" style="left:579px;top:425px;">Freigegeben</div><div class="t th dt" style="left:842.5px;top:425px;">05.07.2022 13:16:16</div><div class="pline" style="top:423px"></div><svg class="i " style="left:700px;top:424px" width="16" height="16"><use href="#pz-r"/></svg><svg class="i " style="left:717px;top:424px" width="16" height="16"><use href="#pz-g"/></svg><svg class="i " style="left:737px;top:424px" width="16" height="16"><use href="#flag"/></svg><svg class="i " style="left:752px;top:424px" width="16" height="16"><use href="#clip"/></svg><svg class="i " style="left:272px;top:447px" width="10" height="7"><use href="#ch-d"/></svg><svg class="i " style="left:287px;top:442px" width="16" height="16"><use href="#folder"/></svg><div class="t th" style="left:308.5px;top:443px;">Backup</div><svg class="i " style="left:305px;top:460px" width="16" height="16"><use href="#pz-y"/></svg><div class="t th" style="left:326.5px;top:461px;">Full Backup</div><div class="t th" style="left:505px;top:461px;">1</div><div class="t th" style="left:579px;top:461px;">Freigegeben</div><div class="t th dt" style="left:842.5px;top:461px;">05.07.2022 13:16:31</div><div class="pline" style="top:459px"></div><svg class="i " style="left:700px;top:460px" width="16" height="16"><use href="#pz-r"/></svg><svg class="i " style="left:717px;top:460px" width="16" height="16"><use href="#pz-g"/></svg><svg class="i " style="left:737px;top:460px" width="16" height="16"><use href="#flag"/></svg><svg class="i " style="left:752px;top:460px" width="16" height="16"><use href="#clip"/></svg><svg class="i " style="left:272px;top:483px" width="10" height="7"><use href="#ch-d"/></svg><svg class="i " style="left:287px;top:478px" width="16" height="16"><use href="#folder"/></svg><div class="t th" style="left:308.5px;top:479px;">Data Collection</div><svg class="i " style="left:305px;top:496px" width="16" height="16"><use href="#pz-y"/></svg><div class="t th" style="left:326.5px;top:497px;">Client Location</div><div class="t th" style="left:505px;top:497px;">1</div><div class="t th" style="left:579px;top:497px;">Freigegeben</div><div class="t th dt" style="left:842.5px;top:497px;">08.06.2022 09:56:16</div><div class="pline" style="top:495px"></div><svg class="i " style="left:700px;top:496px" width="16" height="16"><use href="#pz-r"/></svg><svg class="i " style="left:717px;top:496px" width="16" height="16"><use href="#pz-g"/></svg><svg class="i " style="left:737px;top:496px" width="16" height="16"><use href="#flag"/></svg><svg class="i " style="left:305px;top:514px" width="16" height="16"><use href="#pz-y"/></svg><div class="t th" style="left:326.5px;top:515px;">Client Location (Configuration)</div><div class="t th" style="left:505px;top:515px;">1</div><div class="t th" style="left:579px;top:515px;">Freigegeben</div><div class="t th dt" style="left:842.5px;top:515px;">08.06.2022 09:56:16</div><div class="pline" style="top:513px"></div><svg class="i " style="left:700px;top:514px" width="16" height="16"><use href="#pz-r"/></svg><svg class="i " style="left:737px;top:514px" width="16" height="16"><use href="#flag"/></svg><svg class="i " style="left:305px;top:532px" width="16" height="16"><use href="#pz-y"/></svg><div class="t th" style="left:326.5px;top:533px;">Collect Purchase Information</div><div class="t th" style="left:505px;top:533px;">1</div><div class="t th" style="left:579px;top:533px;">Freigegeben</div><div class="t th dt" style="left:842.5px;top:533px;">05.07.2022 13:16:24</div><div class="pline" style="top:531px"></div><svg class="i " style="left:700px;top:532px" width="16" height="16"><use href="#pz-r"/></svg><svg class="i " style="left:737px;top:532px" width="16" height="16"><use href="#flag"/></svg><svg class="i " style="left:752px;top:532px" width="16" height="16"><use href="#clip"/></svg><svg class="i " style="left:272px;top:555px" width="10" height="7"><use href="#ch-d"/></svg><svg class="i " style="left:287px;top:550px" width="16" height="16"><use href="#folder"/></svg><div class="t th" style="left:308.5px;top:551px;">Helpdesk</div><svg class="i " style="left:305px;top:568px" width="16" height="16"><use href="#pz-y"/></svg><div class="t th" style="left:326.5px;top:569px;">ACMP Error Recorder</div><div class="t th" style="left:505px;top:569px;">1</div><div class="t th" style="left:579px;top:569px;">Freigegeben</div><div class="t th dt" style="left:842.5px;top:569px;">08.06.2022 09:56:16</div><div class="pline" style="top:567px"></div><svg class="i " style="left:700px;top:568px" width="16" height="16"><use href="#pz-r"/></svg><svg class="i " style="left:717px;top:568px" width="16" height="16"><use href="#pz-g"/></svg><svg class="i " style="left:737px;top:568px" width="16" height="16"><use href="#flag"/></svg><svg class="i " style="left:770px;top:568px" width="16" height="16"><use href="#user"/></svg><svg class="i " style="left:305px;top:586px" width="16" height="16"><use href="#pz-y"/></svg><div class="t th" style="left:326.5px;top:587px;">Create Helpdesk Shortcut</div><div class="t th" style="left:505px;top:587px;">1</div><div class="t th" style="left:579px;top:587px;">Freigegeben</div><div class="t th dt" style="left:842.5px;top:587px;">08.06.2022 09:56:16</div><div class="pline" style="top:585px"></div><svg class="i " style="left:700px;top:586px" width="16" height="16"><use href="#pz-r"/></svg><svg class="i " style="left:717px;top:586px" width="16" height="16"><use href="#pz-g"/></svg><svg class="i " style="left:737px;top:586px" width="16" height="16"><use href="#flag"/></svg><svg class="i " style="left:305px;top:604px" width="16" height="16"><use href="#pz-y"/></svg><div class="t th" style="left:326.5px;top:605px;">Create Self-Service Shortcut</div><div class="t th" style="left:505px;top:605px;">1</div><div class="t th" style="left:579px;top:605px;">Freigegeben</div><div class="t th dt" style="left:842.5px;top:605px;">08.06.2022 09:56:16</div><div class="pline" style="top:603px"></div><svg class="i " style="left:700px;top:604px" width="16" height="16"><use href="#pz-r"/></svg><svg class="i " style="left:717px;top:604px" width="16" height="16"><use href="#pz-g"/></svg><svg class="i " style="left:737px;top:604px" width="16" height="16"><use href="#flag"/></svg><svg class="i " style="left:305px;top:622px" width="16" height="16"><use href="#pz-y"/></svg><div class="t th" style="left:326.5px;top:623px;">Create Self-Service Shortcut (Si...</div><div class="t th" style="left:505px;top:623px;">1</div><div class="t th" style="left:579px;top:623px;">Freigegeben</div><div class="t th dt" style="left:842.5px;top:623px;">08.06.2022 09:56:16</div><div class="pline" style="top:621px"></div><svg class="i " style="left:700px;top:622px" width="16" height="16"><use href="#pz-r"/></svg><svg class="i " style="left:717px;top:622px" width="16" height="16"><use href="#pz-g"/></svg><svg class="i " style="left:737px;top:622px" width="16" height="16"><use href="#flag"/></svg><svg class="i " style="left:305px;top:640px" width="16" height="16"><use href="#pz-y"/></svg><div class="t th" style="left:326.5px;top:641px;">Support Form</div><div class="t th" style="left:505px;top:641px;">1</div><div class="t th" style="left:579px;top:641px;">Freigegeben</div><div class="t th dt" style="left:842.5px;top:641px;">08.06.2022 09:56:16</div><div class="pline" style="top:639px"></div><svg class="i " style="left:717px;top:640px" width="16" height="16"><use href="#pz-g"/></svg><svg class="i " style="left:737px;top:640px" width="16" height="16"><use href="#flag"/></svg><svg class="i " style="left:770px;top:640px" width="16" height="16"><use href="#user"/></svg><svg class="i " style="left:272px;top:663px" width="10" height="7"><use href="#ch-d"/></svg><svg class="i " style="left:287px;top:658px" width="16" height="16"><use href="#folder"/></svg><div class="t th" style="left:308.5px;top:659px;">Linux &amp; Mac OS</div><svg class="i " style="left:305px;top:676px" width="16" height="16"><use href="#pz-y"/></svg><div class="t th" style="left:326.5px;top:677px;">Linux &amp; Mac OS Inventory</div><div class="t th" style="left:505px;top:677px;">1</div><div class="t th" style="left:579px;top:677px;">Freigegeben</div><div class="t th dt" style="left:842.5px;top:677px;">08.06.2022 09:56:16</div><div class="pline" style="top:675px"></div><svg class="i " style="left:700px;top:676px" width="16" height="16"><use href="#pz-r"/></svg><svg class="i " style="left:737px;top:676px" width="16" height="16"><use href="#flag"/></svg><svg class="i " style="left:787px;top:676px" width="16" height="16"><use href="#caluser"/></svg><svg class="i " style="left:272px;top:699px" width="10" height="7"><use href="#ch-d"/></svg><svg class="i " style="left:287px;top:694px" width="16" height="16"><use href="#folder"/></svg><div class="t th" style="left:308.5px;top:695px;">Remote Administration</div><svg class="i " style="left:305px;top:712px" width="16" height="16"><use href="#pz-y"/></svg><div class="t th" style="left:326.5px;top:713px;">Manage Remote Control Service</div><div class="t th" style="left:505px;top:713px;">1</div><div class="t th" style="left:579px;top:713px;">Freigegeben</div><div class="t th dt" style="left:842.5px;top:713px;">08.06.2022 09:56:16</div><div class="pline" style="top:711px"></div><svg class="i " style="left:700px;top:712px" width="16" height="16"><use href="#pz-r"/></svg><svg class="i " style="left:717px;top:712px" width="16" height="16"><use href="#pz-g"/></svg><svg class="i " style="left:737px;top:712px" width="16" height="16"><use href="#flag"/></svg><svg class="i " style="left:305px;top:730px" width="16" height="16"><use href="#pz-y"/></svg><div class="t th" style="left:326.5px;top:731px;">Remote Computer Management</div><div class="t th" style="left:505px;top:731px;">1</div><div class="t th" style="left:579px;top:731px;">Freigegeben</div><div class="t th dt" style="left:842.5px;top:731px;">08.06.2022 09:56:16</div><div class="pline" style="top:729px"></div><svg class="i " style="left:700px;top:730px" width="16" height="16"><use href="#pz-r"/></svg><svg class="i " style="left:737px;top:730px" width="16" height="16"><use href="#flag"/></svg><svg class="i " style="left:305px;top:748px" width="16" height="16"><use href="#pz-y"/></svg><div class="t th" style="left:326.5px;top:749px;">Remote Control</div><div class="t th" style="left:505px;top:749px;">1</div><div class="t th" style="left:579px;top:749px;">Freigegeben</div><div class="t th dt" style="left:842.5px;top:749px;">08.06.2022 09:56:16</div><div class="pline" style="top:747px"></div><svg class="i " style="left:700px;top:748px" width="16" height="16"><use href="#pz-r"/></svg><svg class="i " style="left:737px;top:748px" width="16" height="16"><use href="#flag"/></svg><svg class="i " style="left:305px;top:766px" width="16" height="16"><use href="#pz-y"/></svg><div class="t th" style="left:326.5px;top:767px;">Remote Services</div><div class="t th" style="left:505px;top:767px;">1</div><div class="t th" style="left:579px;top:767px;">Freigegeben</div><div class="t th dt" style="left:842.5px;top:767px;">08.06.2022 09:56:16</div><div class="pline" style="top:765px"></div><svg class="i " style="left:700px;top:766px" width="16" height="16"><use href="#pz-r"/></svg><svg class="i " style="left:737px;top:766px" width="16" height="16"><use href="#flag"/></svg><svg class="i " style="left:272px;top:789px" width="10" height="7"><use href="#ch-d"/></svg><svg class="i " style="left:287px;top:784px" width="16" height="16"><use href="#folder"/></svg><div class="t th" style="left:308.5px;top:785px;">Windows Updates</div><svg class="i " style="left:305px;top:802px" width="16" height="16"><use href="#pz-y"/></svg><div class="t th" style="left:326.5px;top:803px;">Windows Update Settings</div><div class="t th" style="left:505px;top:803px;">1</div><div class="t th" style="left:579px;top:803px;">Freigegeben</div><div class="t th dt" style="left:842.5px;top:803px;">08.06.2022 09:56:16</div><div class="pline" style="top:801px"></div><svg class="i " style="left:700px;top:802px" width="16" height="16"><use href="#pz-r"/></svg><svg class="i " style="left:717px;top:802px" width="16" height="16"><use href="#pz-g"/></svg><svg class="i " style="left:737px;top:802px" width="16" height="16"><use href="#flag"/></svg></div><div id="btn"><span>Testen --&gt;</span></div><div id="vhandle"></div><div id="vsplit"></div><svg class="i " style="left:1151px;top:475px" width="6" height="9"><use href="#sp-arrow"/></svg><svg class="i " style="left:1151px;top:621px" width="6" height="9"><use href="#sp-arrow"/></svg><div id="props"><div class="t th" style="left:1168px;top:281px;">Eigenschaft</div><div class="t th" style="left:1278px;top:281px;">Wert</div><div class="phead" style="top:297px"></div><div class="t th b" style="left:1173px;top:299px;">Allgemein</div><div class="prow" style="top:315px"></div><div class="t th" style="left:1190px;top:317px;">Name</div><div class="prow" style="top:333px"></div><div class="t th" style="left:1190px;top:335px;">Version</div><div class="prow" style="top:351px"></div><div class="t th" style="left:1190px;top:353px;">Status</div><div class="prow" style="top:369px"></div><div class="t th" style="left:1190px;top:371px;">Level</div><div class="prow" style="top:387px"></div><div class="t th" style="left:1190px;top:389px;">Quick Command</div><div class="prow" style="top:405px"></div><div class="t th" style="left:1190px;top:407px;">Action-Bar C...</div><div class="prow" style="top:423px"></div><div class="t th" style="left:1190px;top:425px;">Interaktiv</div><div class="phead" style="top:441px"></div><div class="t th b" style="left:1173px;top:443px;">Logs</div><div class="prow" style="top:459px"></div><div class="t th" style="left:1190px;top:461px;">Client</div><div class="prow" style="top:477px"></div><div class="t th" style="left:1190px;top:479px;">Erweiterter C...</div><div class="prow" style="top:495px"></div><div class="t th" style="left:1190px;top:497px;">Console</div><div class="phead" style="top:513px"></div><div class="t th b" style="left:1173px;top:515px;">Skripte</div><div class="prow" style="top:531px"></div><div class="t th" style="left:1190px;top:533px;">Console</div><div class="prow" style="top:549px"></div><div class="t th" style="left:1190px;top:551px;">Client</div><div class="prow" style="top:567px"></div><div class="t th" style="left:1190px;top:569px;">Bedingung(en)</div><div class="phead" style="top:585px"></div><div class="t th b" style="left:1173px;top:587px;">Sicherheit</div><div class="prow" style="top:603px"></div><div class="t th" style="left:1190px;top:605px;">Gesichert</div><div class="pvsep"></div><div class="pvsep2"></div></div></div></div>
<div id="status"><span>© Aagon GmbH 2002 - 2022, all rights reserved</span></div>
<div id="bl"></div><div id="br"></div><div id="bb"></div>
</body></html>
